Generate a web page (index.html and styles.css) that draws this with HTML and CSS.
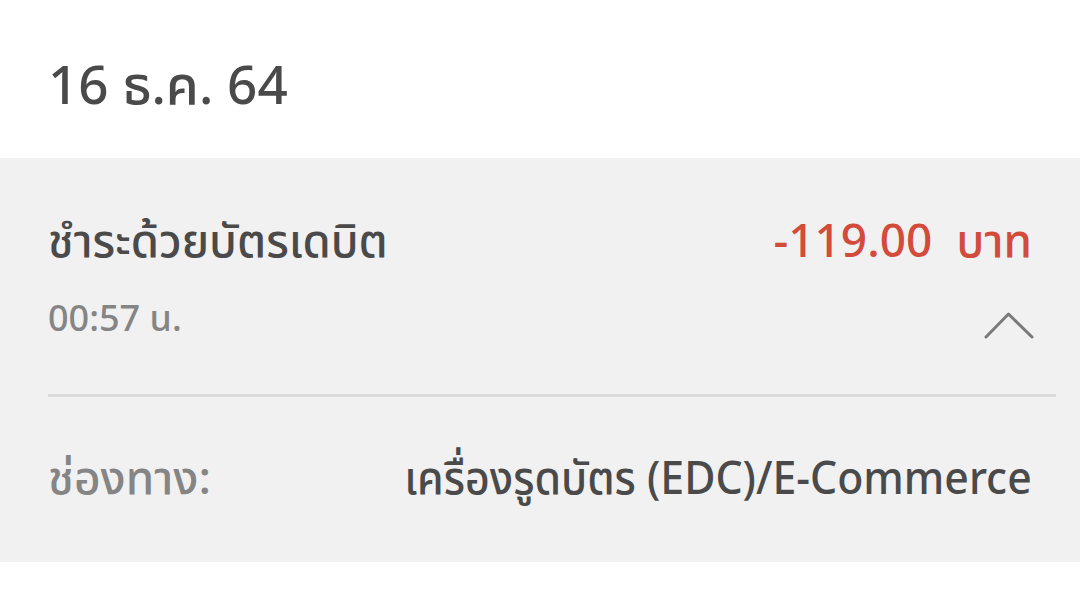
FILE: index.html
```html
<!DOCTYPE html>
<html lang="th">
  <head>
    <meta charset="UTF-8" />
    <title>รายการ</title>
    <link rel="stylesheet" href="styles.css">
  </head>
  <body>
    <div class="date-header">16 ธ.ค. 64</div>

    <!-- รายการธุรกรรม -->
    <div class="txn">
      <div class="txn-top">
        <div class="txn-title">ชำระด้วยบัตรเดบิต</div>
        <div class="txn-amount">-119.00&nbsp; บาท</div>
      </div>
      <div class="txn-sub">
        <div class="txn-time">00:57 น.</div>
        <svg class="chevron" width="50" height="30" viewBox="0 0 50 30">
          <polyline points="2,27 24.5,4 48,27" fill="none" stroke="#7a7a7a" stroke-width="3" stroke-linecap="round" stroke-linejoin="round" />
        </svg>
      </div>
      <div class="divider"></div>
      <div class="txn-detail">
        <div class="detail-label">ช่องทาง:</div>
        <div class="detail-value">เครื่องรูดบัตร (EDC)/E-Commerce</div>
      </div>
    </div>
  </body>
</html>
```

FILE: styles.css
```css
:root {
  --text-dark: #4a4a4a;
  --text-muted: #858585;
  --red: #d24b3b;
  --panel-bg: #f1f1f1;
  --line: #dadada;
}

* {
  margin: 0;
  padding: 0;
  box-sizing: border-box;
}

body {
  background: #fff;
  font-family: "Noto Sans", "Noto Sans Thai", sans-serif;
  font-weight: 500;
  color: var(--text-dark);
  width: 1080px;
  height: 606px;
  overflow: hidden;
}

.date-header {
  height: 158px;
  padding: 49px 48px 0;
  font-size: 53px;
  line-height: 70px;
}

.txn {
  background: var(--panel-bg);
  height: 404px;
  padding: 0 24px 0 48px;
}

.txn-top {
  display: flex;
  justify-content: space-between;
  align-items: baseline;
  padding-top: 53px;
  padding-right: 24px;
}

.txn-title {
  font-size: 45.5px;
  line-height: 56px;
}

.txn-amount {
  font-size: 46px;
  line-height: 56px;
  color: var(--red);
}

.txn-sub {
  display: flex;
  justify-content: space-between;
  align-items: center;
  margin-top: 28px;
  padding-right: 22px;
}

.txn-time {
  font-size: 36px;
  line-height: 46px;
  color: var(--text-muted);
}

.chevron {
  margin-top: 14px;
}

.divider {
  height: 3px;
  background: var(--line);
  margin-top: 53px;
}

.txn-detail {
  display: flex;
  justify-content: space-between;
  align-items: baseline;
  padding-top: 49px;
  padding-right: 24px;
  font-size: 46px;
  line-height: 60px;
}

.detail-label {
  color: var(--text-muted);
}

.detail-value {
  transform: scaleX(0.93);
  transform-origin: right center;
}
```
